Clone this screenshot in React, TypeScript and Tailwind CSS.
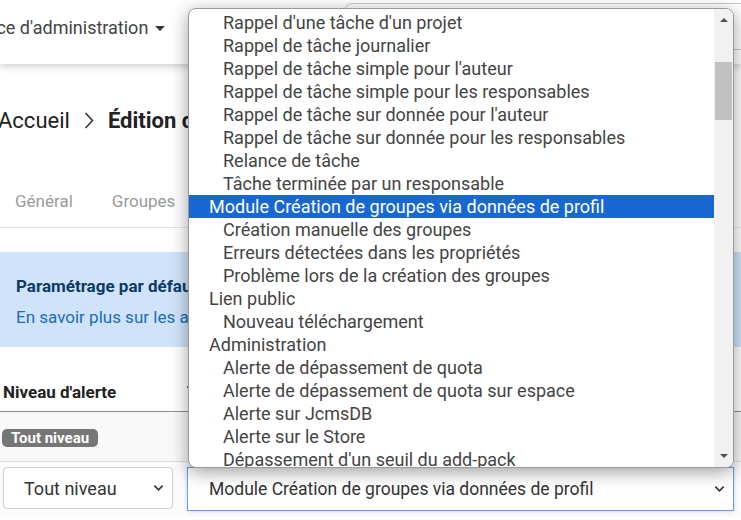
import React from 'react';

type Item = { label: string; group?: boolean; selected?: boolean };

const items: Item[] = [
  { label: "Rappel d'une tâche d'un projet" },
  { label: 'Rappel de tâche journalier' },
  { label: "Rappel de tâche simple pour l'auteur" },
  { label: 'Rappel de tâche simple pour les responsables' },
  { label: "Rappel de tâche sur donnée pour l'auteur" },
  { label: 'Rappel de tâche sur donnée pour les responsables' },
  { label: 'Relance de tâche' },
  { label: 'Tâche terminée par un responsable' },
  { label: 'Module Création de groupes via données de profil', group: true, selected: true },
  { label: 'Création manuelle des groupes' },
  { label: 'Erreurs détectées dans les propriétés' },
  { label: 'Problème lors de la création des groupes' },
  { label: 'Lien public', group: true },
  { label: 'Nouveau téléchargement' },
  { label: 'Administration', group: true },
  { label: 'Alerte de dépassement de quota' },
  { label: 'Alerte de dépassement de quota sur espace' },
  { label: 'Alerte sur JcmsDB' },
  { label: 'Alerte sur le Store' },
  { label: "Dépassement d'un seuil du add-pack" },
];

const Chevron = ({ className }: { className?: string }) => (
  <svg viewBox="0 0 12 8" className={className} fill="none" stroke="currentColor" strokeWidth="1.8">
    <path d="M1.5 1.5 6 6l4.5-4.5" />
  </svg>
);

export default function App() {
  return (
    <div className="relative w-[741px] h-[520px] overflow-hidden bg-white font-['Roboto',sans-serif] text-[#333]">
      {/* Header */}
      <header className="relative z-10 flex h-[64px] items-start bg-white shadow-[0_2px_8px_rgba(0,0,0,0.22)]">
        <div className="ml-[-43px] mt-[14px] flex shrink-0 items-center gap-[7px] whitespace-nowrap text-[18px] text-[#444]">
          Espace d'administration
          <span className="mt-[1px] h-0 w-0 border-x-[5px] border-t-[5px] border-x-transparent border-t-[#333]" />
        </div>
        <div className="ml-auto mr-[-30px] mt-[3px] h-[47px] w-[428px] shrink-0 rounded-[10px] border border-[#c8c8c8] bg-white" />
      </header>

      {/* Breadcrumb */}
      <div className="-ml-[2px] flex h-[112px] items-center gap-[14px] whitespace-nowrap text-[22px] text-[#222]">
        <span>Accueil</span>
        <svg viewBox="0 0 10 18" className="h-[19px] w-[10px]" fill="none" stroke="#333" strokeWidth="1.6">
          <path d="M1.5 1.5 8.5 9l-7 7.5" />
        </svg>
        <span className="font-bold">Édition de la configuration</span>
      </div>

      {/* Tabs */}
      <div className="flex h-[52px] items-center gap-[39px] whitespace-nowrap border-b border-[#e6e6e6] pl-[15px] text-[17px] text-[#9a9a9a]">
        <span>Général</span>
        <span>Groupes</span>
        <span>Alertes</span>
        <span>Notifications</span>
      </div>

      {/* Info box */}
      <div className="mt-[24px] flex h-[95px] flex-col justify-center gap-[10px] whitespace-nowrap bg-[#cfe4fa] px-[16px] pt-[4px] text-[17px] leading-[21px]">
        <div className="font-bold text-[#0d3a66]">Paramétrage par défaut des alertes</div>
        <div className="text-[#1c6bbd]">En savoir plus sur les alertes</div>
      </div>

      {/* Table */}
      <div className="mt-[28px]">
        <div className="flex h-[37px] items-center whitespace-nowrap border-b border-[#8c8c8c] text-[17px] font-bold text-[#222]">
          <div className="w-[187px] shrink-0 pl-[3px]">Niveau d'alerte</div>
          <div>Type d'alerte</div>
        </div>
        <div className="flex h-[50px] items-center border-b border-[#dedede] bg-[#f8f8f8] pl-[2px]">
          <span className="mt-[2px] whitespace-nowrap rounded-[5px] bg-[#767676] px-[9px] py-[1px] text-[15px] font-bold leading-[16px] text-white">
            Tout niveau
          </span>
        </div>
        <div className="flex items-start whitespace-nowrap bg-[#fbfbfb] pt-[5px] pb-[6px]">
          <div className="ml-[3px] flex h-[42px] w-[170px] shrink-0 items-center justify-between rounded-[4px] border border-[#cfcfcf] bg-white pl-[20px] pr-[8px] text-[18px] text-[#333]">
            Tout niveau
            <Chevron className="h-[8px] w-[11px] text-[#333]" />
          </div>
          <div className="ml-[14px] flex h-[44px] w-[547px] shrink-0 items-center justify-between border border-[#6aa0d8] bg-white pl-[21px] pr-[8px] text-[17.5px] text-[#333] shadow-[0_0_4px_rgba(80,140,210,0.35)]">
            Module Création de groupes via données de profil
            <Chevron className="h-[8px] w-[11px] text-[#333]" />
          </div>
        </div>
      </div>

      {/* Open select list */}
      <div className="absolute left-[188px] top-[8px] z-20 flex h-[460px] w-[546px] overflow-hidden rounded-[8px] border border-[#9a9a9a] bg-white shadow-[0_4px_18px_rgba(0,0,0,0.38)]">
        <ul className="flex-1 overflow-hidden pt-[2px] text-[18px] leading-[23px] text-[#444]">
          {items.map((it) => (
            <li
              key={it.label}
              className={`h-[23px] whitespace-nowrap ${it.group ? 'pl-[20px]' : 'pl-[34px]'} ${it.selected ? 'bg-[#1967d2] text-white' : ''}`}
            >
              {it.label}
            </li>
          ))}
        </ul>
        <div className="flex w-[19px] shrink-0 flex-col items-center bg-[#f1f1f1]">
          <span className="mt-[9px] h-0 w-0 border-x-[4px] border-b-[4px] border-x-transparent border-b-[#505050]" />
          <div className="mt-[40px] h-[58px] w-[17px] bg-[#c1c1c1]" />
          <span className="mt-auto mb-[9px] h-0 w-0 border-x-[4px] border-t-[4px] border-x-transparent border-t-[#505050]" />
        </div>
      </div>
    </div>
  );
}
